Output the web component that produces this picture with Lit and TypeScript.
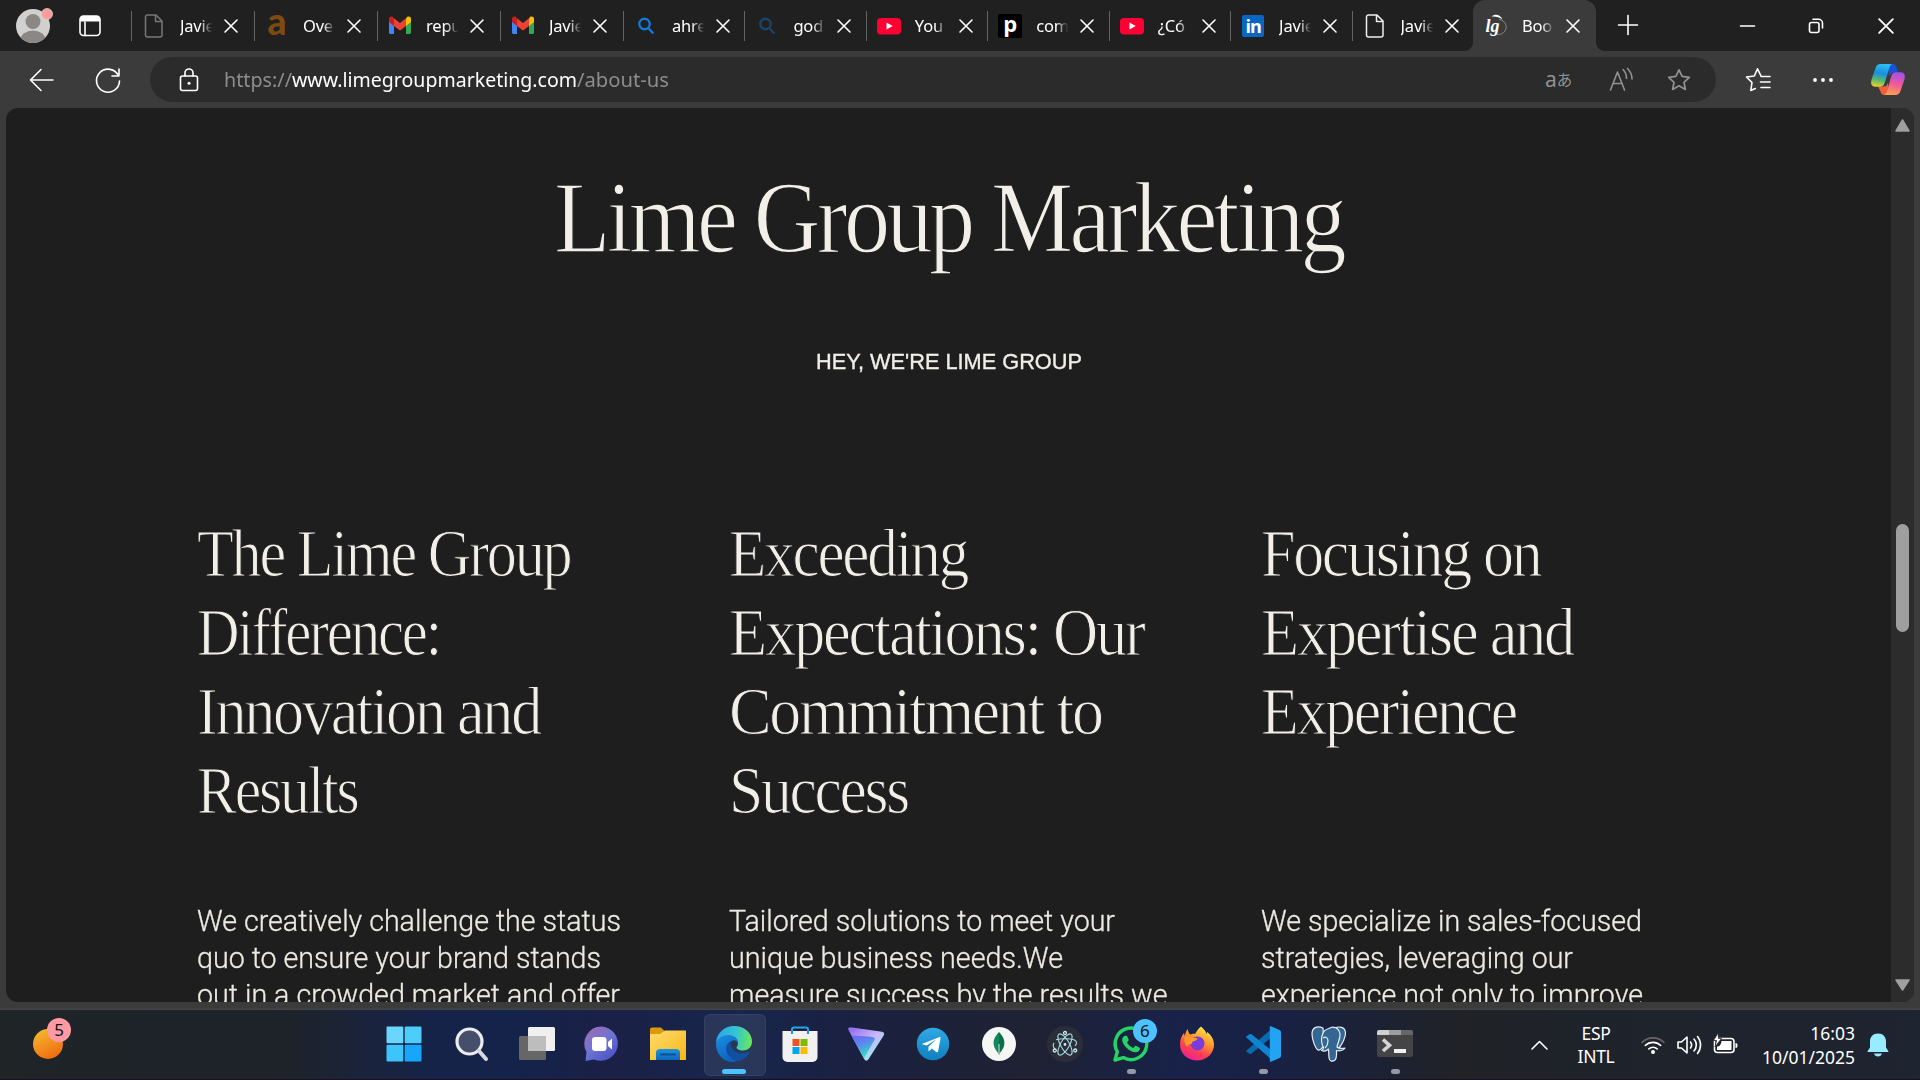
import { LitElement, html, svg, css, TemplateResult } from "lit";
import { customElement, property, state, query } from "lit/decorators.js";
import { styleMap } from "lit/directives/style-map.js";
import { classMap } from "lit/directives/class-map.js";

/** A single line of text condensed or stretched to a given measure. */
@customElement("fit-line")
export class FitLine extends LitElement {
  @property({ type: Number }) width = 0;
  @state() private scale = 1;
  @query(".ink") private ink!: HTMLElement;

  static styles = css`
    :host { display: block; white-space: pre; height: 1lh; }
    .ink { display: inline-block; transform-origin: 0 50%; }
  `;

  firstUpdated() {
    const natural = this.ink.getBoundingClientRect().width;
    if (natural > 0 && this.width > 0) {
      this.scale = this.width / natural;
    }
  }

  render() {
    return html`<span class="ink" style=${styleMap({
      transform: `scaleX(${this.scale})`,
    })}><slot></slot></span>`;
  }
}

const gmail = svg`
  <path d="M1 5v13.500c0 .8.6 1.500 1.500 1.500H6V9z" fill="#4285f4"/>
  <path d="M18 9v11h3.500c.9 0 1.500-.7 1.500-1.500V5z" fill="#34a853"/>
  <path d="M18 4.500V12l5-4V5c0-2.500-2.500-3-4-2z" fill="#fbbc04"/>
  <path d="M6 4.500V12L1 8V5c0-2.500 2.500-3 4-2z" fill="#c5221f"/>
  <path d="M6 4.200l6 4.800 6-4.800V12l-6 4.500L6 12z" fill="#ea4335"/>`;
const youtube = svg`
  <rect x="0" y="4" width="24" height="16.500" rx="4" fill="#ff0033"/>
  <path d="M9.500 8.500v7l6.200-3.500z" fill="#fff"/>`;
const search = (color: string) => svg`
  <g fill="none" stroke=${color} stroke-width="2.400">
    <circle cx="10.500" cy="10" r="5.200"/><path d="M14.300 14l5 5.500"/></g>`;
const page = (color: string) => svg`
  <path d="M5.500 1h8.500l6 6v14a2 2 0 0 1-2 2H5.500a2 2 0 0 1-2-2V3a2 2 0 0 1 2-2zM13.500 1v6.500H20"
    fill="none" stroke=${color} stroke-width="1.500" stroke-linejoin="round"/>`;

interface Tab { icon: TemplateResult; title: string; wide?: boolean; active?: boolean; glyph?: string }

const tabs: Tab[] = [
  { icon: page("#777"), title: "Javie", wide: true },
  { icon: svg``, glyph: "a", title: "Ove", wide: true },
  { icon: gmail, title: "repu", wide: true },
  { icon: gmail, title: "Javie", wide: true },
  { icon: search("#1478d4"), title: "ahre" },
  { icon: search("#1b4468"), title: "god" },
  { icon: youtube, title: "You" },
  { icon: svg``, glyph: "p", title: "com" },
  { icon: youtube, title: "¿Có" },
  { icon: svg``, glyph: "in", title: "Javie" },
  { icon: page("#eee"), title: "Javie" },
  { icon: svg`<path d="M7.500 2.500C11-.5 16.500.5 18.500 5.500 15.500 3 12 2.200 7.500 2.500z" fill="#fff"/>
      <path d="M15 5.500a7.500 7.500 0 1 1-4 14" fill="none" stroke="#8a8a8a" stroke-width=".9"/>`,
    glyph: "lg", title: "Boo", active: true },
];

const columns = [
  {
    heading: [["The Lime Group", 373.5], ["Difference:", 243], ["Innovation and", 343], ["Results", 160.5]],
    body: [
      ["We creatively challenge the status", 424],
      ["quo to ensure your brand stands", 404],
      ["out in a crowded market and offer", 423],
    ],
  },
  {
    heading: [["Exceeding", 238], ["Expectations: Our", 414.5], ["Commitment to", 372.5], ["Success", 179]],
    body: [
      ["Tailored solutions to meet your", 386],
      ["unique business needs.We", 334],
      ["measure success by the results we", 438.5],
    ],
  },
  {
    heading: [["Focusing on", 279.5], ["Expertise and", 312], ["Experience", 255]],
    body: [
      ["We specialize in sales-focused", 381],
      ["strategies, leveraging our", 312],
      ["experience not only to improve", 382],
    ],
  },
] as { heading: [string, number][]; body: [string, number][] }[];

interface App { name: string; art: TemplateResult; running?: boolean; active?: boolean; badge?: string }

const apps: App[] = [
  { name: "start", art: svg`
    <rect x=".5" y=".5" width="16.800" height="16.800" rx="1" fill="#6ad6fb"/>
    <rect x="18.700" y=".5" width="16.800" height="16.800" rx="1" fill="#4dcdfb"/>
    <rect x=".5" y="18.700" width="16.800" height="16.800" rx="1" fill="#3cc4fb"/>
    <rect x="18.700" y="18.700" width="16.800" height="16.800" rx="1" fill="#16a6fc"/>` },
  { name: "search", art: svg`
    <circle cx="17.500" cy="15.500" r="12.500" fill="#454e6b" stroke="#ececf0" stroke-width="3.200"/>
    <path d="M27 25l7 8" stroke="#d6d8e0" stroke-width="4" stroke-linecap="round"/>` },
  { name: "task view", art: svg`
    <rect x="1" y="10" width="27" height="24" rx="1.500" fill="#666"/>
    <rect x="10" y="1" width="27" height="24" rx="1.500" fill="#f0f0f0"/>
    <rect x="10" y="10" width="18" height="15" fill="#bdbdbd"/>` },
  { name: "chat", art: svg`
    <defs><linearGradient id="ch" x1="0" y1=".2" x2=".6" y2="1"><stop offset="0" stop-color="#9a6cb4"/>
      <stop offset=".5" stop-color="#6f74d4"/><stop offset="1" stop-color="#5058c8"/></linearGradient></defs>
    <path d="M18 .5a17.200 17.200 0 1 1-8 33L1.500 35l1-9A17.200 17.200 0 0 1 18 .5z" fill="url(#ch)"/>
    <rect x="8" y="11" width="14.500" height="14" rx="3" fill="#fff"/>
    <path d="M24 16l4-3.500v11L24 20z" fill="#fff"/>` },
  { name: "files", art: svg`
    <defs><linearGradient id="fo" x1="0" y1="0" x2="1" y2="1"><stop offset="0" stop-color="#ffdb70"/>
      <stop offset="1" stop-color="#f8b714"/></linearGradient>
      <linearGradient id="fb" x1="0" y1="0" x2="0" y2="1"><stop offset="0" stop-color="#1a94e0"/>
      <stop offset="1" stop-color="#0f66b8"/></linearGradient></defs>
    <path d="M0 3.500a2 2 0 0 1 2-2h9l4 4v5H0z" fill="#dd9a08"/>
    <path d="M0 8h10l5-3.500h20.500c.3 0 .5.300.5.600V34H0z" fill="url(#fo)"/>
    <path d="M6 34V27a4 4 0 0 1 4-4h16a4 4 0 0 1 4 4v7z" fill="url(#fb)"/>
    <path d="M11 28.500h14" stroke="#0c4f94" stroke-width="2" stroke-linecap="round"/>` },
  { name: "edge", active: true, art: svg`
    <defs><linearGradient id="e1" x1="0" y1=".4" x2="1" y2=".5"><stop offset="0" stop-color="#2aa6e8"/>
      <stop offset=".55" stop-color="#34c6d0"/><stop offset="1" stop-color="#6ae858"/></linearGradient>
      <linearGradient id="e2" x1="0" y1="0" x2=".5" y2="1"><stop offset="0" stop-color="#1b8fe0"/>
      <stop offset="1" stop-color="#0c63c0"/></linearGradient></defs>
    <path d="M0 18C0 7 8.500 0 18 0c11 0 18 7.500 18 15.500 0 6-4.500 9-9 9-4 0-6.500-1.500-6.500-3 0-1 1.500-1.500 1.500-4 0-3.500-4-6.500-9-6.500C6 11 .5 14 0 18z" fill="url(#e1)"/>
    <path d="M0 18c.5-5 6-9 12-9 6.500 0 10.500 4 10 8-1-2-3-3-5-2.500-4 1-6 5-4.500 9.500C14 29 19 32 24 32c-2 2.500-5 4-8 4C7 35.500 0 28 0 18z" fill="url(#e2)"/>
    <path d="M14.500 15.500C9 18 8.500 26 14 31c3 3 7 4.500 10 3.800C28 33.500 32 30 33.500 26.500c.3-.800-.500-1.200-1.200-.8C24 29.500 14.500 26 14.500 15.500z" fill="#124f9c"/>` },
  { name: "store", art: svg`
    <path d="M10 8V3.500A2 2 0 0 1 12 1.500h12a2 2 0 0 1 2 2V8" fill="none" stroke="#2aa5e8" stroke-width="2"/>
    <path d="M.5 5h35v26a5 5 0 0 1-5 5h-25a5 5 0 0 1-5-5z" fill="#f1f1f1"/>
    <path d="M10 5v3M26 5v3" stroke="#1d8fd8" stroke-width="2"/>
    <rect x="10.500" y="13" width="7" height="7" fill="#f25022"/><rect x="18.500" y="13" width="7" height="7" fill="#7fba00"/>
    <rect x="10.500" y="21" width="7" height="7" fill="#00a4ef"/><rect x="18.500" y="21" width="7" height="7" fill="#ffb900"/>` },
  { name: "vpn", art: svg`
    <defs><linearGradient id="p1" x1=".1" y1="0" x2=".5" y2="1"><stop offset="0" stop-color="#7c58f0"/>
      <stop offset=".55" stop-color="#5c88f0"/><stop offset="1" stop-color="#30e0c4"/></linearGradient>
      <linearGradient id="p2" x1="0" y1="0" x2=".8" y2="1"><stop offset="0" stop-color="#8a62f0"/>
      <stop offset=".5" stop-color="#c9b6fb"/><stop offset="1" stop-color="#8cf4e4"/></linearGradient></defs>
    <path d="M.2 3.500C0 2 1 1 2.500 1.300L34 5.800c2 .3 2.700 2 1.700 3.700L20.500 33.300c-1.200 1.800-3.300 1.800-4.200 0z" fill="url(#p2)"/>
    <path d="M.5 4.500c.500.500 1.800 3.500 3 5l17.500 1c5 .5 6.300 1 5.500 3.500L16 32z" fill="url(#p1)"/>` },
  { name: "telegram", art: svg`
    <defs><linearGradient id="tg" x1="0" y1="0" x2="0" y2="1"><stop offset="0" stop-color="#2fa9e4"/>
      <stop offset="1" stop-color="#0f7fc0"/></linearGradient></defs>
    <circle cx="18" cy="18" r="16.200" fill="url(#tg)"/>
    <path d="M7.500 17.800L24 11.200c1-.3 1.700.2 1.500 1.300l-2.400 12.700c-.2 1-1 1.200-1.800.7l-4.500-3.400-2.300 2.300c-.6.500-1.200.2-1.100-.5l.2-3.700 8-7.300-10 6.300-4.200-1.300c-.8-.3-.8-.6.100-.5z" fill="#fff"/>` },
  { name: "mongo", art: svg`
    <circle cx="18" cy="18" r="17" fill="#f6f6f4"/>
    <path d="M18 6c4.500 5 6 8.500 5.200 13-.7 4-3 6-4.700 8.500L18 29z" fill="#0a6e4c"/>
    <path d="M18 6c-4.500 5-6 8.500-5.200 13 .7 4 3 6 4.700 8.500L18 29z" fill="#13875c"/>
    <path d="M18 18v11" stroke="#a9c8b8" stroke-width="1.300"/>` },
  { name: "electron", art: svg`
    <circle cx="18" cy="18" r="18" fill="#2b2d38"/>
    <g fill="none" stroke="#a6dde4" stroke-width="1.100">
      <ellipse cx="18" cy="18.500" rx="4.400" ry="12" transform="rotate(-30 18 18.500)"/>
      <ellipse cx="18" cy="18.500" rx="4.400" ry="12" transform="rotate(30 18 18.500)"/>
      <path d="M9 13.800c4.500-1.500 13.500-1.500 18 0 3.500 1.700 3 4.200 1 6M8 23c-2-2-2.500-4.500-.8-6"/></g>
    <g fill="#c8eef2"><circle cx="18" cy="18.500" r="1.400"/></g>
    <g fill="#2b2d38" stroke="#c8eef2" stroke-width="1.300"><circle cx="18" cy="7" r="1.500"/>
      <circle cx="7.800" cy="24.500" r="1.500"/><circle cx="28.200" cy="24.500" r="1.500"/></g>` },
  { name: "whatsapp", running: true, badge: "6", art: svg`
    <path d="M2 34l2.300-8.300A15.800 15.800 0 1 1 10.300 31.600z" fill="none" stroke="#25d366" stroke-width="3.400" stroke-linejoin="round"/>
    <path d="M12.200 9.800c-.9-.1-3.200 1.600-3 4.500.4 4.500 6.800 11.500 12.800 12 2.800.2 5-1.700 5-4.100 0-.6-4-2.700-4.600-2.500-.8.300-1.500 2.200-2.400 2.200-1.700-.3-5.300-3.400-5.800-5.300 0-.9 1.500-1.800 1.500-2.600 0-.6-1.500-4.100-2-4.200z" fill="#25d366"/>` },
  { name: "firefox", art: svg`
    <defs><linearGradient id="f1" x1=".8" y1="0" x2=".3" y2="1"><stop offset="0" stop-color="#fff04a"/>
      <stop offset=".4" stop-color="#ff9a2a"/><stop offset=".7" stop-color="#ff4050"/><stop offset="1" stop-color="#e8209a"/></linearGradient></defs>
    <path d="M22 .5c3 2.500 5 5 5.500 7.500.5-.6.500-1.500.4-2.300C32 8.500 35 13.500 35 18.500 35 27.500 27.500 34.500 18 34.500S1 27.500 1 18.500C1 14 2.500 9.500 5 7l.8 3c.7-3.500 1.700-5.500 3-7 .2 3 1 4.500 2.700 5.500 1.500-.6 3-.8 4.500-.5C17.500 6 19 2.500 22 .5z" fill="url(#f1)"/>
    <circle cx="18.500" cy="17.500" r="7" fill="#7a3cdc"/>
    <path d="M5.500 11c4-1.500 7.500.5 9 1l4 .3c0 1.500-2 2.700-5 3.200 0 4-4 1-5.500 5.500C6 18 4.500 14 5.500 11z" fill="#ff9a28"/>` },
  { name: "code", running: true, art: svg`
    <path d="M1 11l3-2.500c1-.6 2-.5 2.800.2L27 25v8.500z" fill="#0f84d0"/>
    <path d="M1 25l3 2.500c1 .6 2 .5 2.800-.2L27 11V2.500z" fill="#0a6cb0"/>
    <path d="M1 11L27 34V25L7 8.700c-1-.7-2-.7-3 0L1 11z" fill="#0f84d0"/>
    <path d="M26 .2l8.500 3.700c1 .5 1.500 1.300 1.500 2.300v23.600c0 1-.5 1.800-1.500 2.300L26 35.800c-1 .2-1.200-.3-1.200-.8V1c0-.6.200-1 1.200-.8z" fill="#23a4f2"/>` },
  { name: "postgres", art: svg`
    <g fill="#336791" stroke="#e9eef3" stroke-width="1.200" stroke-linejoin="round">
      <path d="M12 2C6-.5 1 1.500 1 8c0 5 3 14 6 16 2 1 4-2 6-4.500z"/>
      <path d="M24 2c4-2 10-1 10.500 4.500.3 5-3.500 12-6.500 15.500l-5-2z"/>
      <path d="M18 2.500C22-.5 28 1.500 29 8c.5 5-2.500 9-3 13 2 2 5 1.500 8 1-2 3-6 3-8.500 2.500 0 4 .5 7.500-1.500 9.500-2.500 2-5.500 1.500-6-2L17.500 23c-2 2-4.500 2.500-7 1.500 1.500-.7 2-1.500 2-3C9 15 10 4 18 2.500z"/>
      <path d="M12 12c3-2 5 0 5 3s-1 5-3 7" fill="none"/></g>` },
  { name: "terminal", running: true, art: svg`
    <rect x="0" y="4" width="36" height="27" rx="2" fill="#444447"/>
    <path d="M0 9V6a2 2 0 0 1 2-2h10v5z" fill="#d0d0d0"/><path d="M12 4h12v5H12z" fill="#9d9d9d"/>
    <path d="M24 4h10a2 2 0 0 1 2 2v3H24z" fill="#666"/>
    <path d="M6 13.500l6.500 5.800L6 25" fill="none" stroke="#d4d4d4" stroke-width="3.600"/>
    <rect x="17" y="23" width="12" height="4" fill="#f2f2f2"/>` },
];

const starPath = "M12 2.600l2.900 6.100 6.600.8-4.900 4.600 1.300 6.600L12 17.400l-5.900 3.300 1.300-6.600L2.500 9.500l6.600-.8z";

@customElement("app-root")
export class AppRoot extends LitElement {
  static styles = css`
    :host {
      display: flex; flex-direction: column; width: 1920px; height: 1080px; overflow: hidden;
      background: #3b3b3b; color: #fff; font-family: "Noto Sans", "Open Sans", sans-serif;
    }
    * { box-sizing: border-box; }
    svg { display: block; overflow: visible; flex: none; }
    .line { fill: none; stroke: #fff; stroke-width: 1.6; stroke-linecap: round; stroke-linejoin: round; }
    .dim { stroke: #929292; }

    .tabbar { display: flex; height: 51px; flex: none; background: #202020; }
    .profile { width: 131px; display: flex; align-items: center; padding-left: 15px; gap: 28px; }
    .tab { display: flex; align-items: center; width: 121.43px; height: 51px; position: relative; flex: none; }
    .tab.wide { width: 123px; }
    .tab::before { content: ""; width: 1px; height: 30px; background: #636363; flex: none; }
    .tab.active { width: 123px; background: #3b3b3b; border-radius: 12px 12px 0 0; }
    .tab.active::before { background: none; }
    .tab.active .foot { position: absolute; bottom: 0; width: 8px; height: 8px; }
    .foot.l { left: -8px; background: radial-gradient(circle at 0 0, #202020 7.500px, #3b3b3b 8px); }
    .foot.r { right: -8px; background: radial-gradient(circle at 100% 0, #202020 7.500px, #3b3b3b 8px); }
    .fav { width: 24px; height: 24px; margin-left: 10px; flex: none; position: relative; }
    .fav .glyph { position: absolute; inset: 0; display: flex; align-items: center; justify-content: center; }
    .fav .g-a { font: 900 37px/20px "Lato", sans-serif; color: #7d4b12; padding-bottom: 9px; }
    .fav .g-p { font: 700 22px/20px "Open Sans", sans-serif; background: #000; border-radius: 2px; padding-bottom: 6px; }
    .fav .g-in { font: 700 18px/22px "Open Sans", sans-serif; background: #0a66c2; border-radius: 2px; inset: 1px; letter-spacing: -1px; }
    .fav .g-lg { font: italic 700 18px/20px "Liberation Serif", serif; padding: 1px 7px 0 0; }
    .label { width: 33px; margin-left: 14px; white-space: nowrap; font-size: 16.500px; line-height: 24px; letter-spacing: -.2px;
      -webkit-mask-image: linear-gradient(90deg, #000 60%, transparent 98%); mask-image: linear-gradient(90deg, #000 60%, transparent 98%); }
    .tab .x { margin-left: 11px; }
    .plus { margin-left: 22px; align-self: center; margin-bottom: 2px; }
    .controls { display: flex; margin-left: auto; align-items: center; gap: 53.500px; padding-right: 26.500px; }

    .toolbar { display: flex; align-items: center; height: 57px; flex: none; }
    .nav { display: flex; width: 150px; padding-left: 29px; gap: 41px; align-items: center; }
    .address { display: flex; align-items: center; width: 1566px; height: 45px; border-radius: 23px; background: #2b2b2b; padding-left: 27px; }
    .url { display: flex; margin-left: 22.500px; font-size: 20px; line-height: 30px; color: #8d8d8d; }
    .url .host { color: #fff; }
    .url .part { width: var(--w); }
    .tools { display: flex; margin-left: auto; align-items: center; width: 171px; }
    .trans { color: #929292; font: 21px/28px "Noto Sans", sans-serif; width: 28px; display: flex; align-items: center; margin-right: 36px; padding-bottom: 2px; }
    .trans .kana { font: 15.500px/20px "Noto Sans CJK JP", sans-serif; }
    .read { margin-right: 33px; }
    .actions { display: flex; flex: 1; align-items: center; padding-left: 29px; gap: 41px; }
    .copilot { margin-left: -3px; }

    .window { display: flex; height: 894px; margin: 0 6px; border-radius: 12px; overflow: hidden; flex: none; background: #1e1e1e; }
    .page { width: 1885px; height: 894px; overflow: hidden; color: #f1efe8; padding-top: 54px; }
    h1, h2, p { margin: 0; font-weight: 400; }
    h1 { font: 400 102px/112px "Liberation Serif", serif; letter-spacing: -4px; width: 790px; margin-left: 548px; -webkit-text-stroke: 1.500px #1e1e1e; }
    .kicker { font: 400 22.400px/26px "Liberation Sans", sans-serif; width: 266px; margin: 75px auto 0; -webkit-text-stroke: .35px #f1efe8; }
    .cols { display: grid; grid-template-columns: 532px 532.600px 1fr; padding: 138.500px 0 0 190.500px; }
    h2 { font: 400 68px/79.300px "Liberation Serif", serif; letter-spacing: -2.500px; height: 317px; -webkit-text-stroke: 1.100px #1e1e1e; }
    .copy { font: 300 28.800px/37.300px "Roboto", sans-serif; margin-top: 72px; color: #eceae3; -webkit-text-stroke: .3px #eceae3; }

    .scroll { width: 23px; background: #2c2c2c; display: flex; flex-direction: column; align-items: center; padding: 11px 0 10px; }
    .thumb { width: 13px; height: 108px; border-radius: 7px; background: #9f9f9f; margin-top: 391px; }
    .scroll .down { margin-top: auto; }

    .rim { height: 8px; flex: none; background: linear-gradient(#3b3b3b 75%, #454b52); }
    .taskbar { display: flex; height: 70px; flex: none; align-items: center; border-bottom: 1px solid #190f1f;
      background: linear-gradient(90deg, #1f2427 0, #1e232b 290px, #162348 430px, #14234a 520px, #1b2046 610px, #17264c 740px, #1a2142 830px, #1f2232 1030px, #18224a 1180px, #182142 1290px, #202226 1460px, #1e232c 1640px, #1e2430 1920px); }
    .weather { width: 370.500px; flex: none; padding: 0 0 14px 33px; }
    .app { width: 66.130px; flex: none; height: 70px; display: flex; align-items: center; justify-content: center; position: relative; }
    .app.active::before { content: ""; position: absolute; left: 3px; top: 4px; width: 60px; height: 60px; border-radius: 6px; background: rgba(255,255,255,.08); border: 1px solid rgba(255,255,255,.06); }
    .app svg { position: relative; top: -1px; }
    .dot { position: absolute; left: 29px; bottom: 6px; width: 9px; height: 5px; border-radius: 3px; background: #9698a5; }
    .active .dot { left: 21px; width: 24px; background: #4cc2ff; }
    .badge { position: absolute; left: 35px; top: 9px; width: 24px; height: 24px; border-radius: 12px; background: #4cc2ff; color: #111; font-size: 17px; line-height: 24px; text-align: center; }
    .tray { display: flex; align-items: center; height: 66px; flex: 1; padding-left: 102px; }
    .lang { width: 60px; flex: none; margin-left: 18.500px; text-align: center; font-size: 17.500px; line-height: 23px; letter-spacing: -.3px; }
    .status { display: flex; gap: 12px; align-items: center; margin-left: 15px; flex: none; }
    .clock { width: 110px; flex: none; margin-left: 7px; text-align: right; font-size: 17.500px; line-height: 24px; }
    .bell { margin-left: 12px; }
  `;

  private cross(size: number, stroke = 1.6) {
    return html`<svg class="x" width=${size} height=${size} viewBox="0 0 14 14">
      <path class="line" style=${styleMap({ strokeWidth: String(stroke) })} d="M1 1l12 12M13 1L1 13"/></svg>`;
  }

  private renderTab(t: Tab) {
    return html`<div class=${classMap({ tab: true, wide: !!t.wide, active: !!t.active })}>
      ${t.active ? html`<span class="foot l"></span><span class="foot r"></span>` : ""}
      <div class="fav">
        ${t.glyph ? html`<span class="glyph g-${t.glyph}">${t.glyph}</span>` : ""}
        <svg width="24" height="24" viewBox="0 0 24 24">${t.icon}</svg>
      </div>
      <span class="label">${t.title}</span>
      ${this.cross(14)}
    </div>`;
  }

  private renderTabBar() {
    return html`<header class="tabbar">
      <div class="profile">
        <svg width="36" height="36" viewBox="0 0 36 36">
          <defs><clipPath id="av"><circle cx="18" cy="18" r="17"/></clipPath></defs>
          <circle cx="18" cy="18" r="17" fill="#d2d0ce"/>
          <g clip-path="url(#av)" fill="#8a8785"><circle cx="18" cy="13.500" r="7.500"/><ellipse cx="18" cy="32" rx="12.500" ry="9.500"/></g>
          <circle cx="32" cy="6" r="5.500" fill="#ff9a9a" stroke="#d2d0ce" stroke-width=".8"/>
        </svg>
        <svg width="22" height="22" viewBox="0 0 22 22">
          <rect class="line" x="1" y="1" width="20" height="19.500" rx="3.500"/>
          <path d="M1 6.500V4a3 3 0 0 1 3-3h14a3 3 0 0 1 3 3v2.500z" fill="#fff"/>
          <path class="line" d="M6 7v13.500"/>
        </svg>
      </div>
      ${tabs.map((t) => this.renderTab(t))}
      <svg class="plus" width="20" height="20" viewBox="0 0 20 20"><path class="line" d="M10 .5v19M.5 10h19"/></svg>
      <div class="controls">
        <svg width="15" height="16" viewBox="0 0 15 16"><path class="line" d="M.5 8h14"/></svg>
        <svg width="16" height="16" viewBox="0 0 16 16">
          <rect class="line" x="1.500" y="4.500" width="9.500" height="10" rx="2"/>
          <path class="line" d="M5 1.300h5.500a4 4 0 0 1 4 4V10"/></svg>
        ${this.cross(16, 1.6)}
      </div>
    </header>`;
  }

  private renderToolbar() {
    return html`<nav class="toolbar">
      <div class="nav">
        <svg width="25" height="24" viewBox="0 0 25 24"><path class="line" d="M24 12H1.500M12 1.500L1.500 12 12 22.500"/></svg>
        <svg width="26" height="26" viewBox="0 0 26 26">
          <path class="line" d="M23.500 9A11.500 11.500 0 1 0 24.500 14M24 2v7h-7"/></svg>
      </div>
      <div class="address">
        <svg width="24" height="24" viewBox="0 0 24 24">
          <rect class="line" x="3.500" y="8" width="17" height="14.500" rx="2"/>
          <path class="line" d="M8 8V5a4 4 0 0 1 8 0v3"/><circle cx="12" cy="15.300" r="1.500" fill="#fff"/></svg>
        <div class="url">
          <fit-line width="68" class="part" style="--w:68px">https://</fit-line>
          <fit-line width="285" class="part host" style="--w:285px">www.limegroupmarketing.com</fit-line>
          <fit-line width="92" class="part" style="--w:92px">/about-us</fit-line>
        </div>
        <div class="tools">
          <span class="trans">a<span class="kana">あ</span></span>
          <svg class="read" width="24" height="24" viewBox="0 0 24 24">
            <path class="line dim" d="M1.500 22L8.500 4l7 18M4 15.500h9M14 1.500c2.500 2.500 3.500 5.500 3.500 9M18.500.5c3 3 4.500 6.500 4.500 10.500"/></svg>
          <svg width="26" height="26" viewBox="0 0 24 24"><path class="line dim" d=${starPath}/></svg>
        </div>
      </div>
      <div class="actions">
        <svg width="27" height="26" viewBox="0 0 27 26">
          <path class="line" d="M16 9L12.500 1.800 9.300 9l-7.800 1 5.500 5.500L5.800 23.500l4.500-2M16 9.500h9M15.500 15h9.500M16 20.500h9"/></svg>
        <svg width="20" height="6" viewBox="0 0 20 6" fill="#fff"><circle cx="2" cy="3" r="1.900"/><circle cx="10" cy="3" r="1.900"/><circle cx="18" cy="3" r="1.900"/></svg>
        <svg class="copilot" width="34" height="31" viewBox="0 0 34 31">
          <defs>
            <linearGradient id="c1" x1=".5" y1="0" x2=".3" y2="1"><stop offset="0" stop-color="#2ac0f4"/><stop offset=".4" stop-color="#1a8ee0"/><stop offset=".7" stop-color="#52b878"/><stop offset="1" stop-color="#f0d020"/></linearGradient>
            <linearGradient id="c2" x1=".6" y1="0" x2=".4" y2="1"><stop offset="0" stop-color="#a050f0"/><stop offset=".5" stop-color="#f05898"/><stop offset="1" stop-color="#ffa050"/></linearGradient>
          </defs>
          <path d="M17 0h5c2 0 3 1.500 3.600 3.500L27 8.500h-4c-3 0-4 2-5 4z" fill="#1b50d8"/>
          <path d="M7 22.500h6c2 0 3-1 4-4L18 31h-4.500c-2.500 0-3.500-1.500-4-3.500z" fill="#f0603c"/>
          <path d="M9.500 0H22c-2 0-3.200 2-4 5l-4 13c-1 3.500-2.500 4.800-5 4.800H4.500c-4 0-5-3-4-7L4.500 4C5.300 1.500 7 0 9.500 0z" fill="url(#c1)"/>
          <path d="M24.500 31H12.500c2 0 3-2 3.800-4.500L20 13c1-3.500 2.500-4.800 5-4.800h4.500c4 0 5 3 4 7L29.500 27c-.8 2.500-2.500 4-5 4z" fill="url(#c2)"/>
        </svg>
      </div>
    </nav>`;
  }

  private renderPage() {
    return html`<main class="window">
      <article class="page">
        <h1><fit-line width="789">Lime Group Marketing</fit-line></h1>
        <p class="kicker"><fit-line width="266">HEY, WE'RE LIME GROUP</fit-line></p>
        <section class="cols">
          ${columns.map((c) => html`<div>
            <h2>${c.heading.map(([t, w]) => html`<fit-line width=${w}>${t}</fit-line>`)}</h2>
            <p class="copy">${c.body.map(([t, w]) => html`<fit-line width=${w}>${t}</fit-line>`)}</p>
          </div>`)}
        </section>
      </article>
      <aside class="scroll">
        <svg width="15" height="14" viewBox="0 0 15 14"><path d="M7.500 1L14 12H1z" fill="#9f9f9f" stroke="#9f9f9f" stroke-width="1.500" stroke-linejoin="round"/></svg>
        <div class="thumb"></div>
        <svg class="down" width="15" height="14" viewBox="0 0 15 14"><path d="M7.500 12L14 2H1z" fill="#9f9f9f" stroke="#9f9f9f" stroke-width="1.500" stroke-linejoin="round"/></svg>
      </aside>
    </main>`;
  }

  private renderTaskbar() {
    return html`<footer class="taskbar">
      <div class="weather">
        <svg width="40" height="42" viewBox="0 0 40 42">
          <defs><linearGradient id="su" x1=".2" y1="0" x2=".7" y2="1"><stop offset="0" stop-color="#f5b92e"/><stop offset="1" stop-color="#ef6a10"/></linearGradient></defs>
          <circle cx="15" cy="27" r="15" fill="url(#su)"/>
          <circle cx="26" cy="13" r="12" fill="#ff99a4"/>
          <text x="26" y="19" text-anchor="middle" font-size="17" fill="#111">5</text>
        </svg>
      </div>
      ${apps.map((a) => html`<div class=${classMap({ app: true, active: !!a.active })}>
        <svg width="36" height="36" viewBox="0 0 36 36" aria-label=${a.name}>${a.art}</svg>
        ${a.active || a.running ? html`<span class="dot"></span>` : ""}
        ${a.badge ? html`<span class="badge">${a.badge}</span>` : ""}
      </div>`)}
      <div class="tray">
        <svg width="17" height="10" viewBox="0 0 17 10"><path class="line" d="M1 9l7.500-7.500L16 9"/></svg>
        <div class="lang">ESP<br>INTL</div>
        <div class="status">
          <svg width="24" height="20" viewBox="0 0 24 20">
            <path class="line" style="stroke:#666" d="M1 7.500a15.500 15.500 0 0 1 22 0"/>
            <path class="line" d="M4.300 10.500a11 11 0 0 1 15.400 0M7.700 14a6 6 0 0 1 8.600 0"/>
            <circle cx="12" cy="17" r="2" fill="#fff"/></svg>
          <svg width="24" height="20" viewBox="0 0 24 20">
            <path class="line" d="M1 7h3.500L10 2v16l-5.500-5H1zM13.500 7a5 5 0 0 1 0 6M17 4a9 9 0 0 1 0 12M20.500 1.500a13.500 13.500 0 0 1 0 17"/></svg>
          <svg width="25" height="20" viewBox="0 0 25 20">
            <rect class="line" x="1.500" y="3.500" width="19.500" height="14" rx="3"/>
            <path d="M8.500 6H18.500v9H4V11.500c3 0 4-2 4.500-5.500zM22.500 8c1.500 0 2 .8 2 2.500s-.5 2.500-2 2.500z" fill="#fff"/>
            <path d="M5-2L.5 5.500h3L2 12l6.500-8.500H5.500z" fill="#fff" stroke="#1e232c" stroke-width=".8"/></svg>
        </div>
        <div class="clock">16:03<br>10/01/2025</div>
        <svg class="bell" width="22" height="24" viewBox="0 0 22 24">
          <path d="M11 .5c5 0 8 3.500 8 8v6l2.300 3.500c.4.600 0 1-.6 1H1.300c-.6 0-1-.4-.6-1L3 14.500v-6c0-4.500 3-8 8-8zM7 20.500h8c-.6 1.800-2 3-4 3s-3.400-1.200-4-3z" fill="#99ebff"/></svg>
      </div>
    </footer>`;
  }

  render() {
    return html`${this.renderTabBar()}${this.renderToolbar()}${this.renderPage()}
      <div class="rim"></div>${this.renderTaskbar()}`;
  }
}
